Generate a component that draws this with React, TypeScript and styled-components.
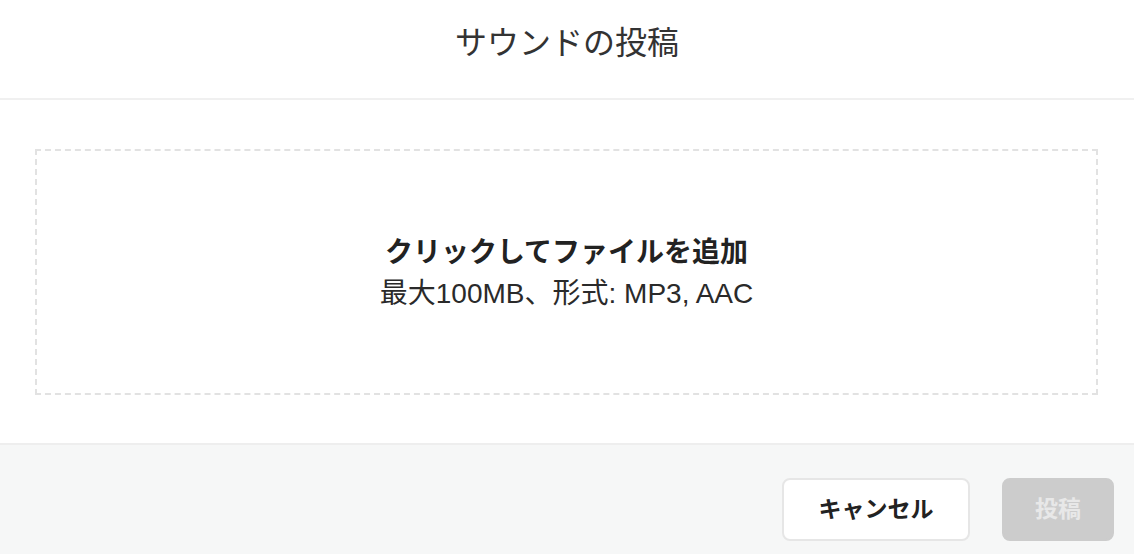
import styled, { createGlobalStyle } from "styled-components";

const GlobalStyle = createGlobalStyle`
  html, body {
    margin: 0;
    padding: 0;
    background: #ffffff;
  }
  body {
    font-family: "Liberation Sans", "Noto Sans CJK JP", sans-serif;
    color: #222222;
  }
`;

const Modal = styled.div`
  width: 1134px;
  height: 554px;
  display: flex;
  flex-direction: column;
  background: #ffffff;
  overflow: hidden;
`;

const Header = styled.div`
  height: 100px;
  box-sizing: border-box;
  display: flex;
  align-items: center;
  justify-content: center;
  border-bottom: 2px solid #f0f0f0;
`;

const Title = styled.h1`
  margin: 0;
  font-family: "Noto Sans CJK JP", sans-serif;
  font-size: 32px;
  font-weight: 400;
  color: #333333;
  padding-bottom: 18px;
`;

const Body = styled.div`
  flex: 1;
  padding: 49px 36px 48px 35px;
`;

const DropZone = styled.div`
  height: 100%;
  box-sizing: border-box;
  border: 2px dashed #e2e2e2;
  display: flex;
  flex-direction: column;
  align-items: center;
  justify-content: center;
  gap: 2px;
  cursor: pointer;
`;

const DropTitle = styled.div`
  font-family: "Noto Sans CJK JP", sans-serif;
  font-size: 28px;
  font-weight: 700;
  line-height: 42px;
  color: #222222;
`;

const DropHint = styled.div`
  font-size: 28px;
  line-height: 42px;
  color: #2a2a2a;
`;

const Footer = styled.div`
  height: 111px;
  box-sizing: border-box;
  background: #f6f7f7;
  border-top: 2px solid #eeeeee;
  display: flex;
  align-items: flex-start;
  justify-content: flex-end;
  gap: 32px;
  padding: 33px 20px 0 0;
`;

const Button = styled.button<{ $primary?: boolean }>`
  height: 63px;
  min-width: ${(p) => (p.$primary ? "112px" : "188px")};
  box-sizing: border-box;
  padding: 0 0 5px;
  border-radius: 8px;
  border: 2px solid ${(p) => (p.$primary ? "#cccccc" : "#e6e6e6")};
  background: ${(p) => (p.$primary ? "#cccccc" : "#ffffff")};
  color: ${(p) => (p.$primary ? "#e8e8e8" : "#222222")};
  font-family: "Noto Sans CJK JP", sans-serif;
  font-size: 23px;
  font-weight: 700;
  cursor: ${(p) => (p.$primary ? "default" : "pointer")};
`;

export default function App() {
  return (
    <>
      <GlobalStyle />
      <Modal>
        <Header>
          <Title>サウンドの投稿</Title>
        </Header>
        <Body>
          <DropZone>
            <DropTitle>クリックしてファイルを追加</DropTitle>
            <DropHint>最大100MB、形式: MP3, AAC</DropHint>
          </DropZone>
        </Body>
        <Footer>
          <Button>キャンセル</Button>
          <Button $primary disabled>
            投稿
          </Button>
        </Footer>
      </Modal>
    </>
  );
}
